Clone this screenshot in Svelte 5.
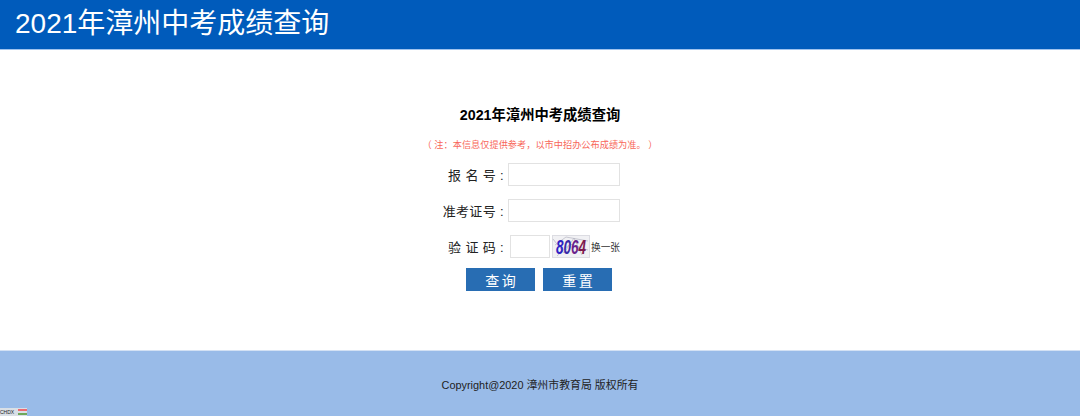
<script>
  const rows = [
    { label: "报 名 号 :", id: "bmh" },
    { label: "准考证号 :", id: "zkzh" }
  ];
</script>

<div class="page">
  <header class="top">
    <h1>2021年漳州中考成绩查询</h1>
  </header>

  <main class="content">
    <h2>2021年漳州中考成绩查询</h2>
    <p class="note">（ 注：本信息仅提供参考，以市中招办公布成绩为准。 ）</p>

    <form class="form" on:submit|preventDefault>
      {#each rows as row}
        <div class="row">
          <label for={row.id}>{row.label}</label>
          <input id={row.id} type="text" />
        </div>
      {/each}
      <div class="row code">
        <label for="yzm">验 证 码 :</label>
        <input id="yzm" class="short" type="text" />
        <svg class="captcha" width="38" height="23" viewBox="0 0 38 23">
          <rect x="0.5" y="0.5" width="37" height="22" fill="#f1f1f4" stroke="#dcdce2" />
          <path d="M1 4 L12 18 L22 3 L30 20 M5 21 L18 9 L36 15 M3 10 L14 2 L36 6" fill="none" stroke="#b4b4c2" stroke-width="0.7" />
          <text transform="translate(4 18.5) scale(0.9 1.3)" class="digits"><tspan fill="#2f22c4">8</tspan><tspan fill="#3a2aa8">0</tspan><tspan fill="#6a1f8c">6</tspan><tspan fill="#7d1a4e">4</tspan></text>
        </svg>
        <span class="swap">换一张</span>
      </div>
      <div class="actions">
        <button type="submit">查 询</button>
        <button type="reset">重 置</button>
      </div>
    </form>
  </main>

  <footer class="bottom">
    <p>Copyright@2020 漳州市教育局 版权所有</p>
    <div class="badge">
      <span class="badge-text">CHDX</span>
      <span class="badge-bars"><i class="red"></i><i class="green"></i></span>
    </div>
  </footer>
</div>

<style>
  :global(body) {
    margin: 0;
    background: #fff;
    font-family: "Liberation Sans", "Noto Sans CJK SC", sans-serif;
  }
  .page { width: 1080px; height: 416px; display: flex; flex-direction: column; overflow: hidden; }
  .top { height: 49px; background: #005bbb; border-bottom: 1px solid #9fc3ee; padding-left: 15px; flex: none; }
  h1 { margin: 0; font-size: 28px; font-weight: 400; line-height: 47px; color: #fff; }
  .content { flex: 1; display: flex; flex-direction: column; align-items: center; padding-top: 55px; }
  h2 { margin: 0; font-size: 14.3px; line-height: 20px; font-weight: 700; color: #000; }
  .note { margin: 13px 0 0; font-size: 9.2px; line-height: 14px; color: #f8675a; }
  .form { width: 224px; margin-top: 11px; display: flex; flex-direction: column; align-items: flex-start; }
  .row { display: flex; align-items: center; height: 23px; margin-bottom: 13px; font-size: 13px; color: #222; }
  .row label { width: 76px; margin-right: 4px; text-align: right; white-space: nowrap; letter-spacing: 0.35px; }
  .row input { box-sizing: border-box; width: 112px; height: 23px; margin: 0; padding: 0 4px; border: 1px solid #e2e2e2; background: #fff; }
  .row input.short { width: 40px; margin-left: 2px; }
  .captcha { margin-left: 2px; display: block; }
  .digits { font-family: "Liberation Sans", sans-serif; font-size: 15px; font-weight: 700; font-style: italic; }
  .swap { margin-left: 1px; font-size: 9.7px; color: #333; white-space: nowrap; }
  .code { margin-bottom: 10px; }
  .actions { display: flex; gap: 8px; margin-left: 38px; }
  button { width: 69px; height: 23px; padding: 0; border: 0; background: #286db3; color: #fff; font: inherit; font-size: 14px; word-spacing: -1.5px; }
  .bottom { height: 66px; flex: none; position: relative; background: #99bbe8; border-top: 1px solid #d3e1f4; box-sizing: border-box; }
  .bottom p { margin: 27px 0 0; text-align: center; font-size: 10.9px; line-height: 14px; color: #222; }
  .badge { position: absolute; left: 0; bottom: 0; width: 27px; height: 8px; display: flex; background: #d9dfe6; }
  .badge-text { width: 18px; font-size: 5px; line-height: 8px; color: #222; overflow: hidden; }
  .badge-bars { flex: 1; display: flex; flex-direction: column; justify-content: space-around; }
  .badge-bars i { display: block; height: 2px; }
  .red { background: #ee6a72; }
  .green { background: #6fa85a; }
</style>
